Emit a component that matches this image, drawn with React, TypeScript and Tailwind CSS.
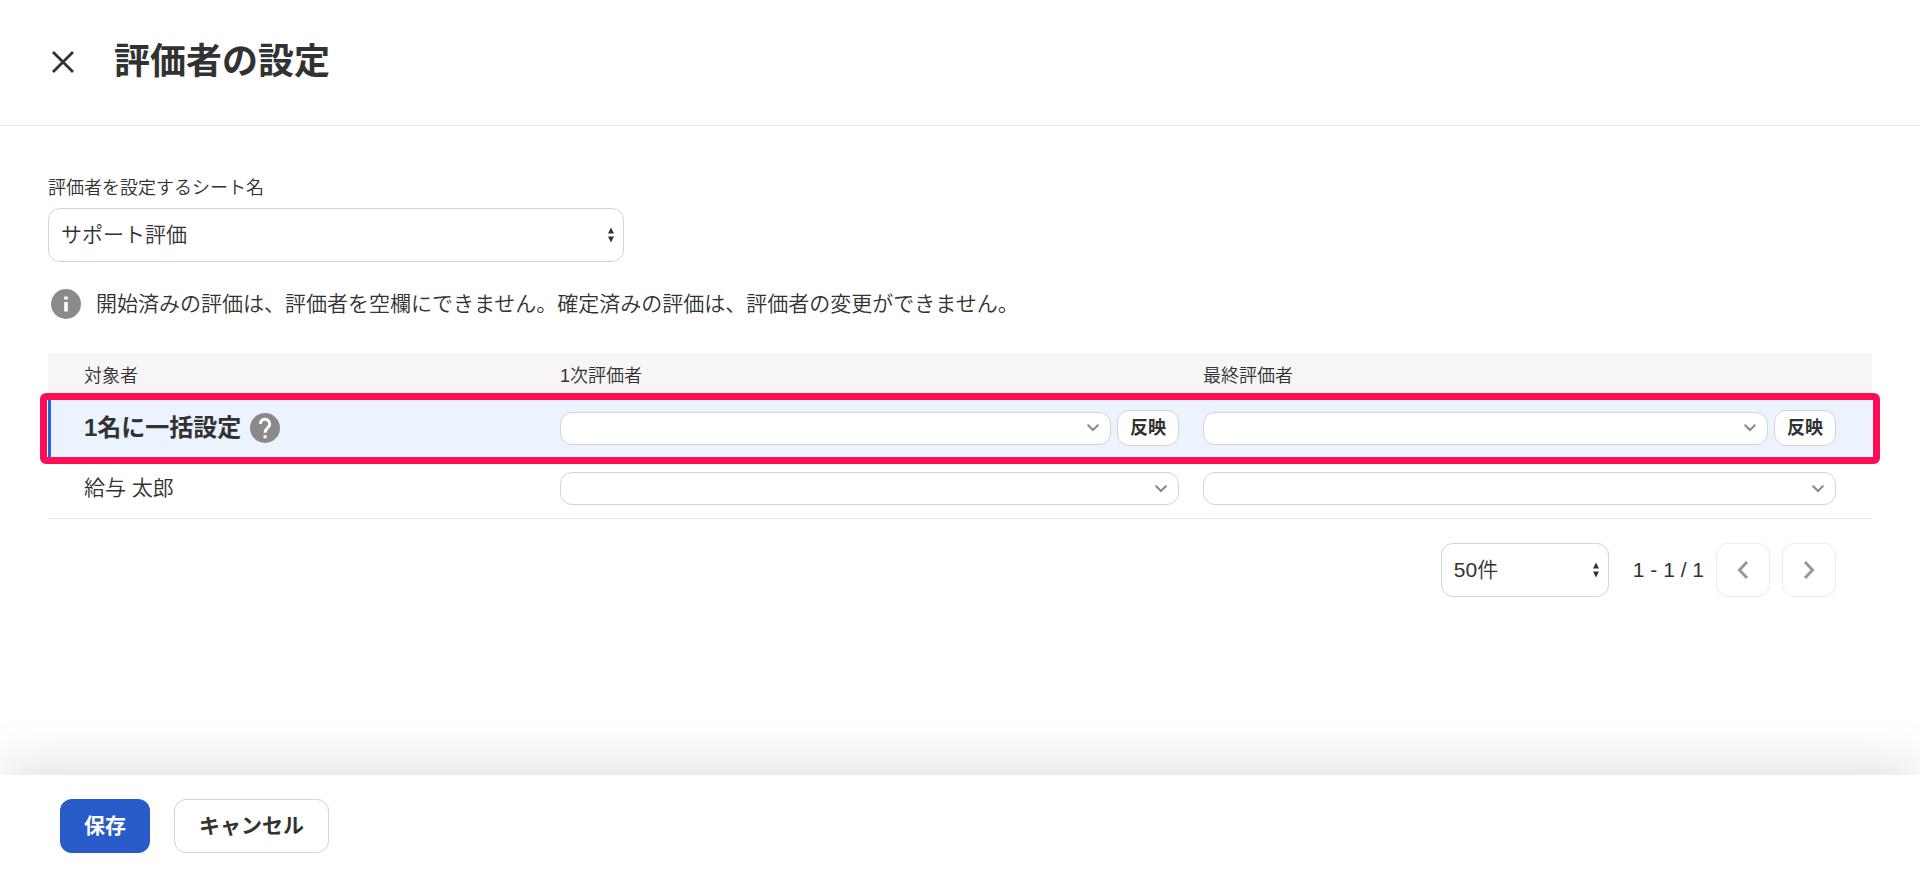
import { useState } from 'react'

const ChevronIcon = () => (
    <svg width="12" height="8" viewBox="0 0 12 8" fill="none">
        <path d="M1.2 1.2L6 6l4.8-4.8" stroke="#8c8989" strokeWidth="2" strokeLinecap="round" />
    </svg>
)

const SortIcon = () => (
    <svg className="shrink-0" width="6" height="16" viewBox="0 0 6 16" fill="#323232">
        <path d="M3 0.5L6 6.5H0zM3 15.5L0 9.5H6z" />
    </svg>
)

const HelpIcon = () => (
    <svg width="30" height="30" viewBox="0 0 30 30">
        <circle cx="15" cy="15" r="15" fill="#8c8989" />
        <path d="M10.3 11a4.7 4.7 0 1 1 8 3.3C16.7 16 15 16.7 15 19.7" fill="none" stroke="#fff" strokeWidth="2.9" />
        <path d="M13.5 22.3h3v3h-3z" fill="#fff" />
    </svg>
)

const InfoIcon = () => (
    <svg width="30" height="30" viewBox="0 0 30 30">
        <circle cx="15" cy="15" r="15" fill="#8c8989" />
        <path d="M13.2 7.5h3.600v3h-3.600zM13.200 13h3.600v9.500h-3.600z" fill="#fff" />
    </svg>
)

const Select = ({ value = '', className = '' }) => (
    <button className={`flex h-[54px] items-center justify-between rounded-xl border border-[#d6d3d0] bg-white pl-3 pr-[9px] ${className}`}>
        <span>{value}</span>
        <SortIcon />
    </button>
)

const Combo = () => (
    <div className="flex h-[33px] flex-1 items-center justify-end rounded-xl border border-[#d6d3d0] bg-white pr-[11px]">
        <ChevronIcon />
    </div>
)

const ApplyButton = () => (
    <button className="h-9 w-[62px] rounded-xl border border-[#d6d3d0] bg-white pb-px text-[18px] font-bold leading-none">反映</button>
)

const PagerButton = ({ d = '', className = '' }) => (
    <button className={`flex h-[54px] w-[54px] items-center justify-center rounded-xl border border-[#ebebeb] bg-white ${className}`}>
        <svg width="12" height="18" viewBox="0 0 12 18" fill="none" stroke="#999797" strokeWidth="3">
            <path d={d} />
        </svg>
    </button>
)

const columns = ['対象者', '1次評価者', '最終評価者']

export default function App() {
    const [sheet] = useState('サポート評価')

    return (
        <div className="flex h-[876px] flex-col overflow-hidden bg-white font-['Liberation_Sans','Noto_Sans_CJK_JP',sans-serif] text-[21px] font-[350] leading-[30px] text-[#323232]">
            <header className="flex h-[126px] shrink-0 items-center border-b border-[#e5e5e5] pb-[2px] pl-[52px]">
                <svg width="22" height="22" viewBox="0 0 22 22" fill="none" stroke="#323232" strokeWidth="2.8">
                    <path d="M1 1l20 20M21 1L1 21" />
                </svg>
                <h1 className="ml-10 text-[36px] font-bold leading-[40px]">評価者の設定</h1>
            </header>

            <main className="flex-1 px-12 pt-12">
                <div className="text-[18px] leading-[28px]">評価者を設定するシート名</div>
                <Select value={sheet} className="mt-1.5 w-[576px]" />

                <div className="mt-[27px] flex items-center gap-[15px] pl-[3px]">
                    <InfoIcon />
                    <p>開始済みの評価は、評価者を空欄にできません。確定済みの評価は、評価者の変更ができません。</p>
                </div>

                <section className="relative mt-[34px]">
                    <div className="grid h-[43px] grid-cols-[476px_643px_1fr] items-center bg-[#f7f5f5] pl-9 pt-0.5 text-[18px]">
                        {columns.map((c) => (
                            <div key={c}>{c}</div>
                        ))}
                    </div>
                    <div className="grid h-[65px] grid-cols-[476px_619px_657px] items-center border-l-[3px] border-[#2864dc] bg-[#ebf3ff] pb-px pl-[33px]">
                        <div className="flex items-center gap-[9px] text-[24px] font-bold">
                            <span className="-mt-px">1名に一括設定</span>
                            <HelpIcon />
                        </div>
                        <div className="flex items-center gap-1.5"><Combo /><ApplyButton /></div>
                        <div className="ml-6 flex items-center gap-1.5"><Combo /><ApplyButton /></div>
                    </div>
                    <div className="grid h-[58px] grid-cols-[476px_619px_657px] items-center border-b border-[#e5e5e5] pb-0.5 pl-9">
                        <div className="-mt-0.5">給与 太郎</div>
                        <div className="flex"><Combo /></div>
                        <div className="ml-6 flex"><Combo /></div>
                    </div>
                    {/* 一括設定の行を囲む枠 */}
                    <div className="absolute -left-2 top-10 h-[71px] w-[1840px] rounded-md border-[7px] border-[#ff0d57]" />
                </section>

                <div className="mt-6 flex items-center justify-end pr-9">
                    <Select value="50件" className="w-[168px]" />
                    <span className="ml-6 mr-3">1 - 1 / 1</span>
                    <PagerButton d="M10 1L2.5 9l7.5 8" />
                    <PagerButton d="M2 1l7.5 8L2 17" className="ml-3" />
                </div>
            </main>

            <footer className="flex h-[101px] shrink-0 items-center gap-6 bg-white pl-[60px] font-bold shadow-[0_0_60px_rgba(0,0,0,0.17)]">
                <button className="h-[54px] w-[90px] rounded-xl bg-[#285ac8] text-white">保存</button>
                <button className="h-[54px] w-[155px] rounded-xl border border-[#d6d3d0]">キャンセル</button>
            </footer>
        </div>
    )
}
